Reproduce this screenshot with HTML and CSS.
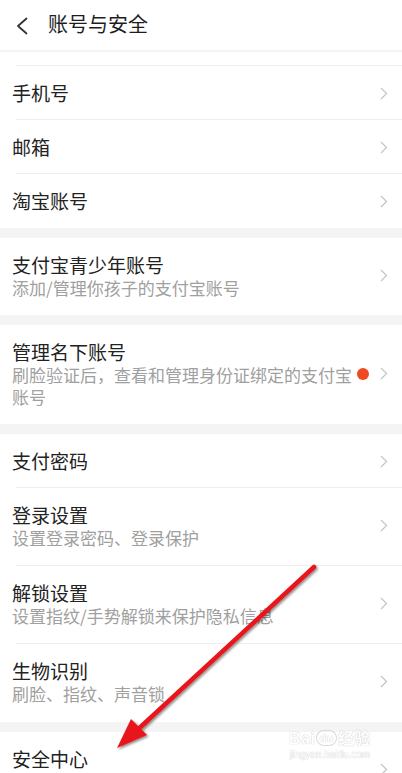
FILE: index.html
```html
<!DOCTYPE html>
<html lang="zh-CN">
<head>
  <meta charset="UTF-8" />
  <title>账号与安全</title>
  <link rel="stylesheet" href="styles.css">
</head>
<body>
  <div class="screen">
    <header class="topbar">
      <svg class="back" width="12" height="18" viewBox="0 0 12 18">
        <path d="M10.5 1.5 L2 9 L10.5 16.5" fill="none" stroke="#333" stroke-width="1.8" stroke-linecap="round" stroke-linejoin="round"/>
      </svg>
      <h1>账号与安全</h1>
    </header>

    <section class="group group-first">
      <div class="item item-cut"></div>
      <div class="item">
        <div class="text"><div class="title">手机号</div></div>
        <svg class="chev" width="8" height="13" viewBox="0 0 8 13"><path d="M1 1 L6.5 6.5 L1 12" fill="none" stroke="#c6c6c6" stroke-width="1.3"/></svg>
      </div>
      <div class="item">
        <div class="text"><div class="title">邮箱</div></div>
        <svg class="chev" width="8" height="13" viewBox="0 0 8 13"><path d="M1 1 L6.5 6.5 L1 12" fill="none" stroke="#c6c6c6" stroke-width="1.3"/></svg>
      </div>
      <div class="item">
        <div class="text"><div class="title">淘宝账号</div></div>
        <svg class="chev" width="8" height="13" viewBox="0 0 8 13"><path d="M1 1 L6.5 6.5 L1 12" fill="none" stroke="#c6c6c6" stroke-width="1.3"/></svg>
      </div>
    </section>

    <section class="group">
      <div class="item item-detail">
        <div class="text">
          <div class="title">支付宝青少年账号</div>
          <div class="sub">添加/管理你孩子的支付宝账号</div>
        </div>
        <svg class="chev" width="8" height="13" viewBox="0 0 8 13"><path d="M1 1 L6.5 6.5 L1 12" fill="none" stroke="#c6c6c6" stroke-width="1.3"/></svg>
      </div>
    </section>

    <section class="group">
      <div class="item item-detail">
        <div class="text text-narrow">
          <div class="title">管理名下账号</div>
          <div class="sub">刷脸验证后，查看和管理身份证绑定的支付宝账号</div>
        </div>
        <span class="dot"></span>
        <svg class="chev" width="8" height="13" viewBox="0 0 8 13"><path d="M1 1 L6.5 6.5 L1 12" fill="none" stroke="#c6c6c6" stroke-width="1.3"/></svg>
      </div>
    </section>

    <section class="group group-roomy">
      <div class="item">
        <div class="text"><div class="title">支付密码</div></div>
        <svg class="chev" width="8" height="13" viewBox="0 0 8 13"><path d="M1 1 L6.5 6.5 L1 12" fill="none" stroke="#c6c6c6" stroke-width="1.3"/></svg>
      </div>
      <div class="item item-detail">
        <div class="text">
          <div class="title">登录设置</div>
          <div class="sub">设置登录密码、登录保护</div>
        </div>
        <svg class="chev" width="8" height="13" viewBox="0 0 8 13"><path d="M1 1 L6.5 6.5 L1 12" fill="none" stroke="#c6c6c6" stroke-width="1.3"/></svg>
      </div>
      <div class="item item-detail">
        <div class="text">
          <div class="title">解锁设置</div>
          <div class="sub">设置指纹/手势解锁来保护隐私信息</div>
        </div>
        <svg class="chev" width="8" height="13" viewBox="0 0 8 13"><path d="M1 1 L6.5 6.5 L1 12" fill="none" stroke="#c6c6c6" stroke-width="1.3"/></svg>
      </div>
      <div class="item item-detail">
        <div class="text">
          <div class="title">生物识别</div>
          <div class="sub">刷脸、指纹、声音锁</div>
        </div>
        <svg class="chev" width="8" height="13" viewBox="0 0 8 13"><path d="M1 1 L6.5 6.5 L1 12" fill="none" stroke="#c6c6c6" stroke-width="1.3"/></svg>
      </div>
    </section>

    <section class="group group-roomy">
      <div class="item item-detail">
        <div class="text">
          <div class="title">安全中心</div>
          <div class="sub">账户安全检测、安全知识学习</div>
        </div>
        <svg class="chev" width="8" height="13" viewBox="0 0 8 13"><path d="M1 1 L6.5 6.5 L1 12" fill="none" stroke="#c6c6c6" stroke-width="1.3"/></svg>
      </div>
    </section>

    <!-- annotation drawn over the screenshot -->
    <svg class="arrow" width="402" height="773" viewBox="0 0 402 773">
      <defs>
        <filter id="shade" x="-20%" y="-20%" width="140%" height="140%">
          <feDropShadow dx="1.5" dy="1.5" stdDeviation="1.2" flood-color="#000" flood-opacity="0.45"/>
        </filter>
      </defs>
      <g filter="url(#shade)">
        <line x1="314" y1="567" x2="134" y2="733" stroke="#e8161b" stroke-width="4.5" stroke-linecap="round"/>
        <polygon points="117,748 131,719 147,735" fill="#e8161b"/>
      </g>
    </svg>

    <div class="watermark">
      <div class="wm-logo">Bai<span class="wm-du">du</span>经验</div>
      <div class="wm-url">jingyan.baidu.com</div>
    </div>
  </div>
</body>
</html>
```

FILE: styles.css
```css
html, body {
  margin: 0;
  padding: 0;
}

body {
  font-family: "Noto Sans CJK SC", "Noto Sans", sans-serif;
  background: #fff;
}

.screen {
  position: relative;
  width: 402px;
  height: 773px;
  overflow: hidden;
  background: #f4f4f4;
}

.topbar {
  height: 50px;
  display: flex;
  align-items: center;
  padding-left: 16px;
  background: #fff;
}

.topbar .back {
  margin-top: 1px;
}

.topbar h1 {
  margin: 0 0 2px 20px;
  font-size: 20px;
  font-weight: 400;
  color: #1e1e1e;
  line-height: 26px;
}

.group {
  background: #fff;
  margin-top: 10px;
}

.group-first {
  margin-top: 2px;
}

.item {
  display: flex;
  align-items: center;
  height: 54px;
  padding: 0 14px 0 12px;
  box-sizing: border-box;
}

.item:not(:last-child) {
  background: linear-gradient(#efefef, #efefef) no-repeat 16px 100% / calc(100% - 16px) 1px;
}

.item-cut {
  height: 14px;
}

.item-detail {
  height: auto;
  padding-top: 14px;
  padding-bottom: 16px;
}

.group-roomy .item-detail {
  padding-bottom: 17px;
}

.text {
  flex: 1;
  min-width: 0;
}

.item:not(.item-detail) .text {
  margin-bottom: 2px;
}

.text-narrow {
  margin-right: 2px;
}

.title {
  font-size: 19px;
  line-height: 25px;
  color: #222;
}

.sub {
  font-size: 17px;
  line-height: 22px;
  color: #a0a0a0;
}

.dot {
  width: 12px;
  height: 12px;
  border-radius: 50%;
  background: #f04820;
  margin-right: 11px;
  flex-shrink: 0;
}

.chev {
  flex-shrink: 0;
}

.arrow {
  position: absolute;
  left: 0;
  top: 0;
  pointer-events: none;
}

.watermark {
  position: absolute;
  left: 285px;
  top: 729px;
  width: 90px;
  text-align: center;
  color: #fff;
  font-family: "Liberation Sans", "Noto Sans CJK SC", sans-serif;
  text-shadow: 0 0 1px #bdbdbd, 0 0 1px #bdbdbd;
  opacity: 0.8;
  pointer-events: none;
}

.wm-logo {
  font-size: 16px;
  font-weight: 700;
  line-height: 20px;
  letter-spacing: 0.5px;
}

.wm-du {
  display: inline-block;
  font-size: 11px;
  line-height: 14px;
  padding: 0 2px;
  margin: 0 2px;
  border-radius: 7px;
  box-shadow: 0 0 0 1px #d0d0d0;
  vertical-align: 2px;
}

.wm-url {
  font-size: 10px;
  line-height: 12px;
}
```
